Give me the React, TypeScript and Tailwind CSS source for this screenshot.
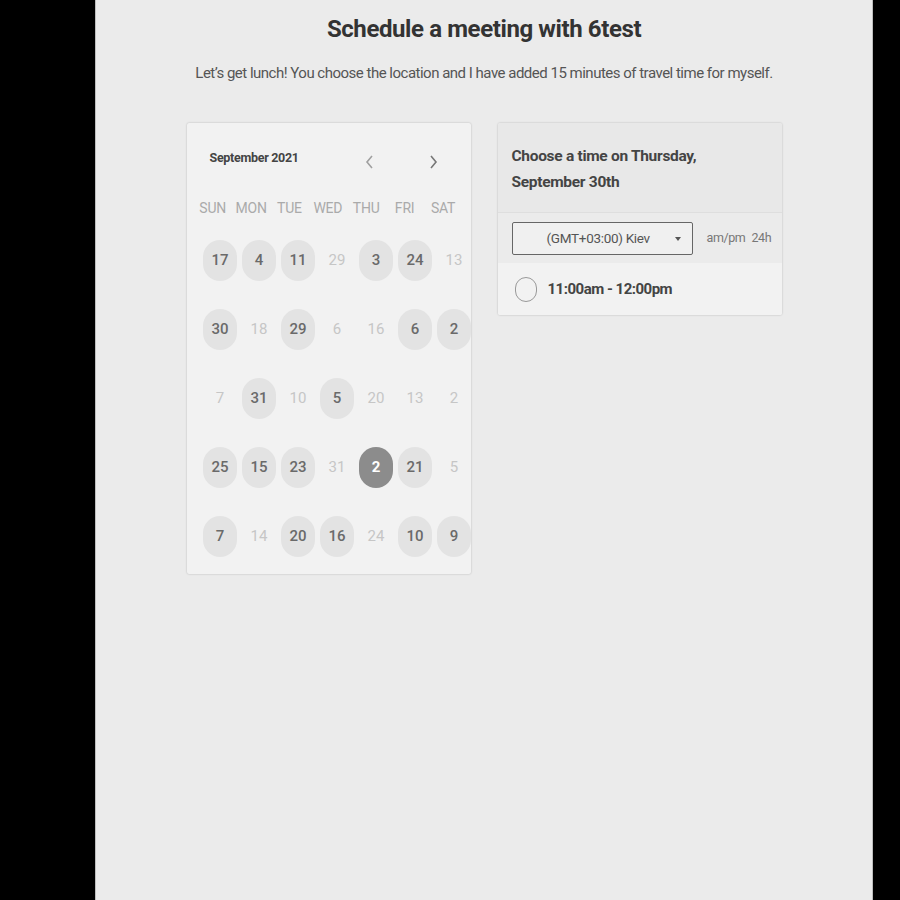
import React from "react";

type Day = { n: number; on: boolean; sel?: boolean };

const rows: Day[][] = [
  [
    { n: 17, on: true },
    { n: 4, on: true },
    { n: 11, on: true },
    { n: 29, on: false },
    { n: 3, on: true },
    { n: 24, on: true },
    { n: 13, on: false },
  ],
  [
    { n: 30, on: true },
    { n: 18, on: false },
    { n: 29, on: true },
    { n: 6, on: false },
    { n: 16, on: false },
    { n: 6, on: true },
    { n: 2, on: true },
  ],
  [
    { n: 7, on: false },
    { n: 31, on: true },
    { n: 10, on: false },
    { n: 5, on: true },
    { n: 20, on: false },
    { n: 13, on: false },
    { n: 2, on: false },
  ],
  [
    { n: 25, on: true },
    { n: 15, on: true },
    { n: 23, on: true },
    { n: 31, on: false },
    { n: 2, on: true, sel: true },
    { n: 21, on: true },
    { n: 5, on: false },
  ],
  [
    { n: 7, on: true },
    { n: 14, on: false },
    { n: 20, on: true },
    { n: 16, on: true },
    { n: 24, on: false },
    { n: 10, on: true },
    { n: 9, on: true },
  ],
];

const weekdays = ["SUN", "MON", "TUE", "WED", "THU", "FRI", "SAT"];

function DayCell({ d }: { d: Day }) {
  if (d.sel) {
    return (
      <div className="flex h-[69px] items-center justify-center">
        <div className="flex h-[41px] w-[34px] items-center justify-center rounded-full bg-[#8c8c8c] text-[15px] font-bold text-white">
          {d.n}
        </div>
      </div>
    );
  }
  if (d.on) {
    return (
      <div className="flex h-[69px] items-center justify-center">
        <div className="flex h-[41px] w-[34px] items-center justify-center rounded-full bg-[#e3e3e3] text-[15px] font-medium text-[#6a6a6a]">
          {d.n}
        </div>
      </div>
    );
  }
  return (
    <div className="flex h-[69px] items-center justify-center">
      <div className="flex h-[41px] w-[34px] items-center justify-center text-[15px] font-normal text-[#c6c6c6]">
        {d.n}
      </div>
    </div>
  );
}

export default function App() {
  return (
    <div
      className="flex h-[900px] w-[900px] bg-black"
      style={{ fontFamily: "Roboto, 'Liberation Sans', sans-serif" }}
    >
      <div className="w-[95px] shrink-0 bg-black" />
      <div className="flex w-[778px] shrink-0 flex-col items-center border-l border-r border-[#bdbdbd] bg-[#ebebeb]">
        <h1 className="mt-[14px] text-[24px] font-bold leading-[30px] tracking-[-0.4px] text-[#333333]">
          Schedule a meeting with 6test
        </h1>
        <p className="mt-[19px] text-[15px] leading-[20px] tracking-[-0.5px] text-[#555555]">
          Let’s get lunch! You choose the location and I have added 15 minutes of travel time for myself.
        </p>

        <div className="mt-[40px] flex items-start gap-[27px]">
          {/* Calendar card */}
          <div className="h-[451px] w-[284px] overflow-hidden rounded-[2px] bg-[#f2f2f2] shadow-[0_0_2px_rgba(0,0,0,0.25)]">
            <div className="mt-[25px] flex h-[20px] items-center pl-[23px]">
              <span className="w-[153px] text-[12.5px] font-bold tracking-[-0.3px] text-[#444444]">
                September 2021
              </span>
              <div className="flex items-center gap-[49px] pt-[8px]">
                <svg width="14" height="16" viewBox="0 0 14 16">
                  <path d="M9 2 L4 8 L9 14" fill="none" stroke="#a0a0a0" strokeWidth="1.6" />
                </svg>
                <svg width="14" height="16" viewBox="0 0 14 16">
                  <path d="M5 2 L10 8 L5 14" fill="none" stroke="#777777" strokeWidth="1.6" />
                </svg>
              </div>
            </div>
            <div className="mt-[30px] grid h-[20px] grid-cols-[repeat(7,38.4px)] pl-[7px]">
              {weekdays.map((w) => (
                <div
                  key={w}
                  className="flex items-center justify-center text-[14px] tracking-[-0.2px] text-[#aaaaaa]"
                >
                  {w}
                </div>
              ))}
            </div>
            <div className="mt-[8px] grid grid-cols-[repeat(7,39px)] pl-[14px]">
              {rows.flat().map((d, i) => (
                <DayCell key={i} d={d} />
              ))}
            </div>
          </div>

          {/* Time card */}
          <div className="w-[284px] overflow-hidden rounded-[2px] bg-[#f2f2f2] shadow-[0_0_2px_rgba(0,0,0,0.25)]">
            <div className="h-[89px] bg-[#e8e8e8] px-[14px] pt-[20px] text-[15.5px] font-bold leading-[26px] tracking-[-0.3px] text-[#444444]">
              Choose a time on Thursday,
              <br />
              September 30th
            </div>
            <div className="flex h-[51px] items-center border-t border-[#dedede] bg-[#ebebeb] pl-[14px]">
              <div className="relative flex h-[33px] w-[181px] items-center rounded-[2px] border border-[#666666] bg-[#f0f0f0] pl-[34px]">
                <span className="text-[13.5px] tracking-[-0.3px] text-[#555555]">(GMT+03:00) Kiev</span>
                <svg className="absolute right-[11px] top-[14px]" width="6" height="4" viewBox="0 0 6 4">
                  <path d="M0 0 L6 0 L3 4 Z" fill="#555555" />
                </svg>
              </div>
              <span className="ml-[14px] text-[12.5px] tracking-[-0.4px] text-[#777777]">am/pm</span>
              <span className="ml-[6px] text-[12.5px] tracking-[-0.4px] text-[#777777]">24h</span>
            </div>
            <div className="flex h-[52px] items-center bg-[#f2f2f2] pl-[17px]">
              <div className="h-[25px] w-[22px] rounded-full border-[1.5px] border-[#999999]" />
              <span className="ml-[11px] text-[15px] font-bold tracking-[-0.5px] text-[#444444]">
                11:00am - 12:00pm
              </span>
            </div>
          </div>
        </div>
      </div>
      <div className="flex-1 bg-black" />
    </div>
  );
}
